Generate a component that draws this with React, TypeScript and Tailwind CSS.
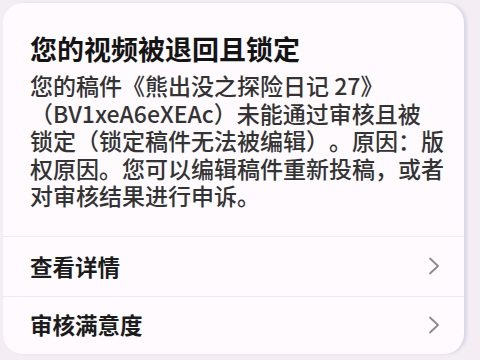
const rows = ['查看详情', '审核满意度'];

const lines = [
  '您的稿件《熊出没之探险日记 27》',
  '（BV1xeA6eXEAc）未能通过审核且被',
  '锁定（锁定稿件无法被编辑）。原因：版',
  '权原因。您可以编辑稿件重新投稿，或者',
  '对审核结果进行申诉。',
];

function Chevron() {
  return (
    <svg width="12" height="18" viewBox="0 0 12 18" fill="none" className="text-[#8a8a8a]">
      <path d="M2 1.5 L10 9 L2 16.5" stroke="currentColor" strokeWidth="1.8" strokeLinecap="round" strokeLinejoin="round" />
    </svg>
  );
}

export default function App() {
  return (
    <div
      className="w-[480px] h-[360px] overflow-hidden bg-[#f4eef4] pt-[3px] pl-[3px] [text-spacing-trim:space-all]"
      style={{ fontFamily: '"Noto Sans CJK SC", "Noto Sans", sans-serif' }}
    >
      <div className="w-[461px] h-[351px] rounded-[20px] bg-[#fefafe] shadow-[3px_0_3px_rgba(170,175,215,0.35)] flex flex-col">
        <div className="pt-[28px] pl-[27px] pb-[26px]">
          <h1 className="text-[27px] leading-[36px] font-bold text-[#141414]">您的视频被退回且锁定</h1>
          <div className="mt-[5px] text-[23px] leading-[27.6px] font-medium text-[#333333]">
            {lines.map((line) => (
              <p key={line} className="whitespace-nowrap">{line}</p>
            ))}
          </div>
        </div>
        {rows.map((label, i) => (
          <div
            key={label}
            className={`flex items-center justify-between border-t border-[#f0eaf0] pl-[27px] pr-[24px] ${i === 0 ? 'h-[60px]' : 'h-[57px]'}`}
          >
            <span className="text-[22.5px] font-bold text-[#1c1c1c]">{label}</span>
            <Chevron />
          </div>
        ))}
      </div>
    </div>
  );
}
